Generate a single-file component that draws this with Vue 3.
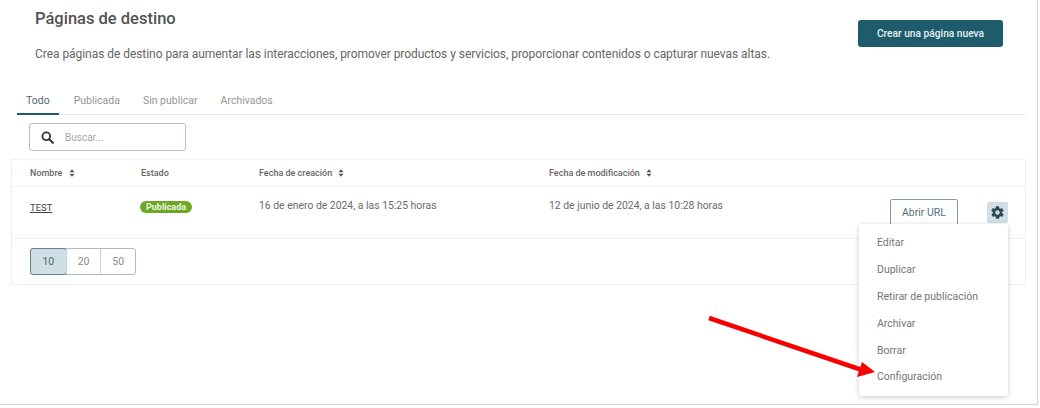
<script setup>
const tabs = [
  { label: 'Todo', active: true },
  { label: 'Publicada' },
  { label: 'Sin publicar' },
  { label: 'Archivados' }
]
const sizes = [
  { n: 10, active: true },
  { n: 20 },
  { n: 50 }
]
const menu = ['Editar', 'Duplicar', 'Retirar de publicación', 'Archivar', 'Borrar', 'Configuración']
</script>

<template>
  <div class="page">
    <header class="head">
      <div>
        <h1>Páginas de destino</h1>
        <p>Crea páginas de destino para aumentar las interacciones, promover productos y servicios, proporcionar contenidos o capturar nuevas altas.</p>
      </div>
      <button class="primary">Crear una página nueva</button>
    </header>

    <nav class="tabs">
      <span v-for="t in tabs" :key="t.label" class="tab" :class="{ on: t.active }">{{ t.label }}</span>
    </nav>

    <div class="search">
      <svg viewBox="0 0 16 16" width="13" height="13"><circle cx="6.5" cy="6.5" r="4.8" fill="none" stroke="#333" stroke-width="2.2"/><path d="M10 10l4.6 4.6" stroke="#333" stroke-width="2.6" stroke-linecap="round"/></svg>
      <span>Buscar...</span>
    </div>

    <section class="table">
      <div class="row hdr">
        <div class="c1">Nombre <svg class="sort" viewBox="0 0 8 10" width="6" height="8"><path d="M4 0l3.4 4H.6zM4 10L.6 6h6.8z" fill="#555"/></svg></div>
        <div class="c2">Estado</div>
        <div class="c3">Fecha de creación <svg class="sort" viewBox="0 0 8 10" width="6" height="8"><path d="M4 0l3.4 4H.6zM4 10L.6 6h6.8z" fill="#555"/></svg></div>
        <div class="c4">Fecha de modificación <svg class="sort" viewBox="0 0 8 10" width="6" height="8"><path d="M4 0l3.4 4H.6zM4 10L.6 6h6.8z" fill="#555"/></svg></div>
      </div>
      <div class="row body">
        <div class="c1 name"><a class="link">TEST</a></div>
        <div class="c2"><span class="badge">Publicada</span></div>
        <div class="c3 date">16 de enero de 2024, a las 15:25 horas</div>
        <div class="c4 date">12 de junio de 2024, a las 10:28 horas</div>
        <div class="actions">
          <button class="outline">Abrir URL</button>
          <button class="gear">
            <svg viewBox="0 0 24 24" width="15" height="15"><path fill="#2c4a55" d="M19.4 13a7.8 7.8 0 0 0 0-2l2.1-1.6a.5.5 0 0 0 .1-.6l-2-3.5a.5.5 0 0 0-.6-.2l-2.5 1a7.3 7.3 0 0 0-1.7-1l-.4-2.7a.5.5 0 0 0-.5-.4h-4a.5.5 0 0 0-.5.4l-.4 2.7a7.3 7.3 0 0 0-1.7 1l-2.5-1a.5.5 0 0 0-.6.2l-2 3.5a.5.5 0 0 0 .1.6L4.6 11a7.8 7.8 0 0 0 0 2l-2.1 1.6a.5.5 0 0 0-.1.6l2 3.5c.1.2.4.3.6.2l2.5-1c.5.4 1.1.7 1.7 1l.4 2.7c0 .2.3.4.5.4h4c.2 0 .5-.2.5-.4l.4-2.7c.6-.3 1.2-.6 1.7-1l2.5 1c.2.1.5 0 .6-.2l2-3.5a.5.5 0 0 0-.1-.6zM12 15.5a3.5 3.5 0 1 1 0-7 3.5 3.5 0 0 1 0 7z"/></svg>
          </button>
        </div>
      </div>
      <div class="foot">
        <div class="pager">
          <span v-for="s in sizes" :key="s.n" class="size" :class="{ on: s.active }">{{ s.n }}</span>
        </div>
      </div>
    </section>

    <ul class="menu">
      <li v-for="m in menu" :key="m">{{ m }}</li>
    </ul>

    <svg class="arrow" viewBox="0 0 1040 408" width="1040" height="408">
      <path d="M709 318L862 370" stroke="#f80000" stroke-width="4.5" fill="none"/>
      <path d="M875 372L857 377L862 362Z" fill="#f80000"/>
    </svg>
  </div>
</template>

<style>
html, body { margin: 0; background: #fff; }
</style>

<style scoped>
.page {
  position: relative;
  box-sizing: border-box;
  width: 1038px;
  height: 405px;
  border-right: 1px solid #d4d4d4;
  border-bottom: 1px solid #d4d4d4;
  font-family: Roboto, "Liberation Sans", sans-serif;
  color: #555;
  overflow: hidden;
  padding: 0 11px 0 11px;
}
.head {
  display: flex;
  justify-content: space-between;
  padding: 9px 23px 0 24px;
  height: 81px;
  box-sizing: border-box;
}
h1 {
  margin: 0;
  font-size: 16.5px;
  line-height: 20px;
  font-weight: 500;
  color: #525252;
}
.head p {
  margin: 16px 0 0;
  font-size: 12px;
  line-height: 18px;
  letter-spacing: -.05px;
  color: #666;
}
.primary {
  margin-top: 11px;
  width: 145px;
  height: 27px;
  border: 0;
  border-radius: 3px;
  background: #1e5c6c;
  color: #e4f0f3;
  font: 500 10.2px Roboto, sans-serif;
  padding: 0;
}
.tabs {
  display: flex;
  gap: 23px;
  height: 25px;
  margin: 9px 0 0 6px;
  border-bottom: 1px solid #eaeaea;
  box-sizing: border-box;
}
.tab {
  font-size: 10.5px;
  line-height: 17px;
  padding: 2px 0 0;
  color: #969696;
}
.tab.on {
  color: #4d6a74;
  border-bottom: 2px solid #1e5c6c;
  height: 21px;
  padding: 2px 9px 0;
  margin-right: -8px;
}
.search {
  display: flex;
  align-items: center;
  gap: 11px;
  box-sizing: border-box;
  width: 157px;
  height: 28px;
  margin: 8px 0 8px 18px;
  padding-left: 11px;
  border: 1px solid #b9c2c6;
  border-radius: 3px;
  font-size: 10px;
  color: #a6a6a6;
}
.table {
  border: 1px solid #f0f0f0;
  border-top-color: #f3f3f3;
}
.row {
  display: flex;
  border-bottom: 1px solid #f0f0f0;
}
.hdr { height: 27px; box-sizing: border-box; align-items: center; font-size: 9px; font-weight: 500; color: #666; }
.body { height: 51px; position: relative; font-size: 10.4px; }
.c1 { width: 129px; padding-left: 18px; flex: none; box-sizing: border-box; }
.c2 { width: 118px; flex: none; }
.c3 { width: 290px; flex: none; }
.c4 { flex: none; }
.sort { margin-left: 4px; vertical-align: -1px; }
.body > div { padding-top: 13px; }
.body > .name { padding-top: 14px; }
.body > .date { padding-top: 12px; }
.date { color: #6a6a6a; line-height: 13px; }
.link { font-size: 9.5px; color: #444; text-decoration: underline; }
.badge {
  display: inline-block;
  margin-left: -1px;
  background: #6ca726;
  color: #eef6e0;
  font-size: 9px;
  font-weight: 700;
  line-height: 12px;
  border-radius: 7px;
  padding: 0 6px;
}
.body .actions {
  position: absolute;
  right: 17px;
  top: 12px;
  padding: 0;
  display: flex;
  align-items: flex-start;
  gap: 29px;
}
.outline {
  width: 68px;
  height: 27px;
  background: #fff;
  border: 1px solid #7f9fa9;
  border-radius: 2px;
  color: #54717b;
  font: 400 10.5px Roboto, sans-serif;
  padding: 0;
}
.gear {
  width: 21px;
  height: 21px;
  margin-top: 3px;
  padding: 0;
  border: 0;
  border-radius: 2px;
  background: #d0dfe5;
  display: flex;
  align-items: center;
  justify-content: center;
}
.foot { height: 45px; padding: 9px 0 0 18px; box-sizing: border-box; }
.pager {
  display: inline-flex;
  height: 27px;
  border: 1px solid #aebabf;
  border-radius: 3px;
  box-sizing: border-box;
}
.size {
  box-sizing: border-box;
  width: 34.7px;
  text-align: center;
  font-size: 10.5px;
  line-height: 25px;
  color: #8c8c8c;
  border-left: 1px solid #c8d0d3;
}
.size:first-child { border-left: 0; }
.size.on {
  background: #d0dfe5;
  color: #4d6a74;
  outline: 1px solid #5e8592;
  border-radius: 2px;
}
.menu {
  position: absolute;
  left: 859px;
  top: 224px;
  width: 149px;
  height: 172px;
  box-sizing: border-box;
  margin: 0;
  padding: 5px 0 0 18px;
  list-style: none;
  background: #fff;
  border-radius: 3px;
  box-shadow: 0 1px 5px rgba(0,0,0,.22);
  font-size: 10.5px;
  color: #757575;
}
.menu li { height: 26.9px; line-height: 27px; }
.arrow { position: absolute; left: 0; top: 0; pointer-events: none; }
</style>
